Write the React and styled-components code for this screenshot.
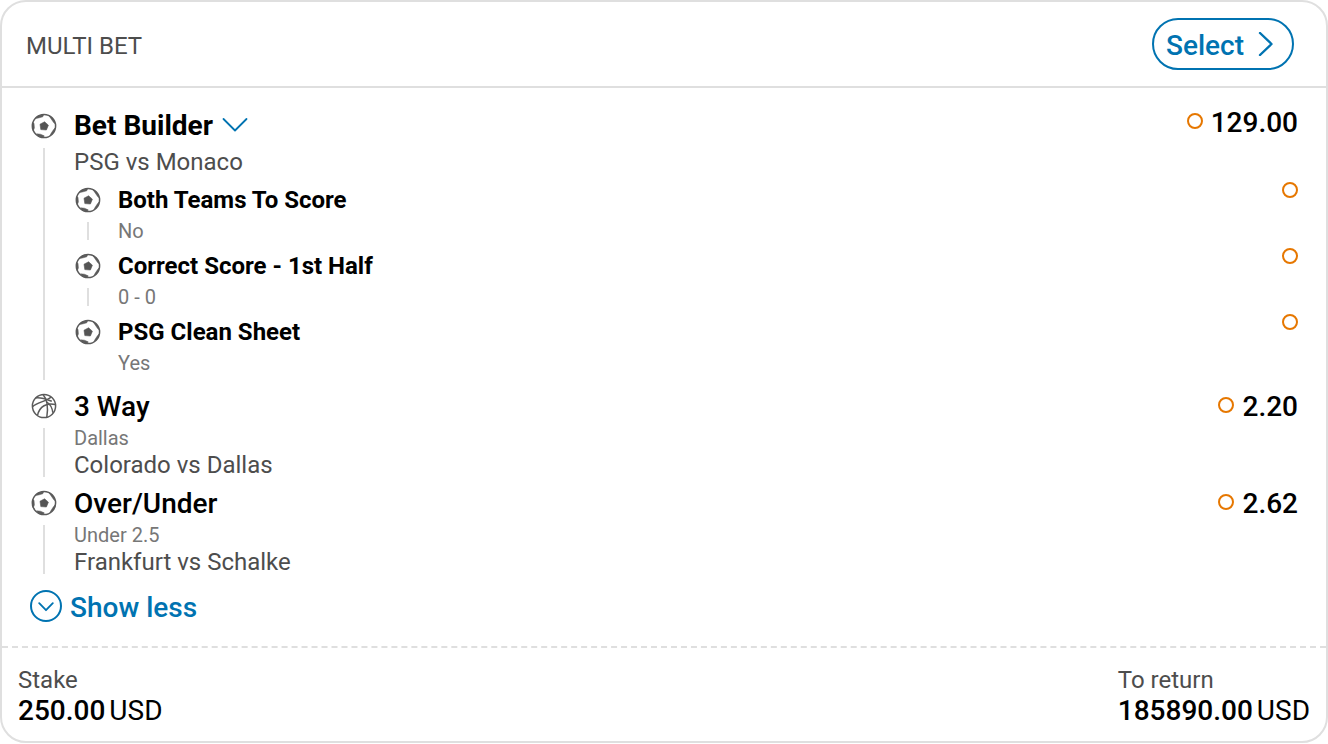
import React from "react";
import styled, { createGlobalStyle } from "styled-components";

const colors = {
  blue: "#0073b1",
  orange: "#e67700",
  line: "#dfdfdf",
  text: "#4d4d4d",
  muted: "#777",
};

const selections = [
  {
    sport: "football",
    title: "Bet Builder",
    bold: true,
    event: "PSG vs Monaco",
    odds: "129.00",
    legs: [
      { title: "Both Teams To Score", pick: "No" },
      { title: "Correct Score - 1st Half", pick: "0 - 0" },
      { title: "PSG Clean Sheet", pick: "Yes" },
    ],
  },
  {
    sport: "basketball",
    title: "3 Way",
    pick: "Dallas",
    event: "Colorado vs Dallas",
    odds: "2.20",
  },
  {
    sport: "football",
    title: "Over/Under",
    pick: "Under 2.5",
    event: "Frankfurt vs Schalke",
    odds: "2.62",
  },
];

const FootballIcon = () => (
  <svg width="26" height="26" viewBox="0 0 26 26" fill="none">
    <circle cx="13" cy="13" r="11.6" stroke="#5a5a5a" strokeWidth="1.5" />
    <path
      d="M9 11.2L13.6 8.8L17.4 12.2L15.4 17L9.8 16.6Z"
      fill="#555"
      stroke="#555"
      strokeWidth="0.6"
    />
    <path
      d="M7 2.8L12.6 1.8L11.8 3.8L7.4 5L4.4 5.6ZM17.6 2.2L22.2 6L24.4 10.8L22.8 9.8L20.2 6ZM1.4 9.4L3 10.2L3.4 15L2.2 17.8L1.2 15.6ZM24.6 14.4L22.6 19.6L18.8 23L20 20.4L22.6 16.6ZM5.6 20.8L9.4 21.2L13.2 22.8L12.4 24.6L7.4 23.4Z"
      fill="#5a5a5a"
      stroke="#5a5a5a"
      strokeWidth="0.5"
    />
  </svg>
);

const BasketballIcon = () => (
  <svg
    width="26"
    height="26"
    viewBox="0 0 26 26"
    fill="none"
    stroke="#5a5a5a"
    strokeWidth="1.5"
  >
    <circle cx="13" cy="13" r="11.6" />
    <path d="M4.6 5C8 4.2 12 5 20.8 8.2" />
    <path d="M1.6 13.6C6 9.4 15 8.4 20.2 4" />
    <path d="M12 1.4C15.6 5.4 17.4 14 15.8 24.2" />
    <path d="M24.4 11.6C16 9.4 8.4 13.4 6.6 22.2" />
    <path d="M15.8 9C19.4 11.4 21.4 15 21.8 19.8" />
  </svg>
);

const Arrow = ({ width, height, d, stroke = 2 }) => (
  <svg
    width={width}
    height={height}
    viewBox={`0 0 ${width} ${height}`}
    fill="none"
    stroke={colors.blue}
    strokeWidth={stroke}
    strokeLinecap="round"
    strokeLinejoin="round"
  >
    <path d={d} />
  </svg>
);

const Selection = ({ item }) => (
  <SelectionStyled>
    <Rail>
      <IconBox>
        {item.sport === "football" ? <FootballIcon /> : <BasketballIcon />}
      </IconBox>
      <RailLine />
    </Rail>
    <Details $spaced={!!item.legs}>
      <Title $bold={item.bold}>
        {item.title}
        {item.legs && (
          <Arrow width={26} height={16} d="M1.5 2L13 13.5L24.5 2" stroke={1.8} />
        )}
      </Title>
      {item.pick && <Pick>{item.pick}</Pick>}
      <Event $spaced={!!item.legs}>{item.event}</Event>
      {item.legs && item.legs.map((leg) => <Leg key={leg.title} leg={leg} />)}
    </Details>
    <Odds $raised={!!item.legs}>
      <Ring />
      {item.odds}
    </Odds>
  </SelectionStyled>
);

const Leg = ({ leg }) => (
  <LegStyled>
    <LegRail>
      <FootballIcon />
      <LegLine />
    </LegRail>
    <LegText>
      <LegTitle>{leg.title}</LegTitle>
      <LegPick>{leg.pick}</LegPick>
    </LegText>
    <Ring />
  </LegStyled>
);

const App = () => {
  return (
    <>
      <GlobalStyle />
      <Card>
        <Header>
          <Heading>MULTI BET</Heading>
          <SelectButton>
            <span>Select</span>
            <Arrow width={16} height={24} d="M2 1L13.5 12L2 23" stroke={2.4} />
          </SelectButton>
        </Header>
        <Body>
          {selections.map((item) => (
            <Selection key={item.title} item={item} />
          ))}
          <ShowLess>
            <Circle>
              <Arrow width={16} height={10} d="M1.2 1.2L8 8.2L14.8 1.2" stroke={1.8} />
            </Circle>
            <span>Show less</span>
          </ShowLess>
        </Body>
        <Footer>
          <Total>
            <Label>Stake</Label>
            <Amount>
              <b>250.00</b>USD
            </Amount>
          </Total>
          <Total>
            <Label>To return</Label>
            <Amount>
              <b>185890.00</b>USD
            </Amount>
          </Total>
        </Footer>
      </Card>
    </>
  );
};

const GlobalStyle = createGlobalStyle`
  * {
    box-sizing: border-box;
  }
  body {
    margin: 0;
    background: #fff;
    font-family: Roboto, sans-serif;
  }
  svg {
    display: block;
    flex: none;
  }
`;

const Card = styled.div`
  display: flex;
  flex-direction: column;
  width: 1328px;
  height: 743px;
  border: 2px solid ${colors.line};
  border-radius: 26px;
  background: #fff;
  white-space: nowrap;
`;

const Header = styled.div`
  display: flex;
  align-items: center;
  justify-content: space-between;
  height: 86px;
  padding: 0 32px 0 24px;
  border-bottom: 2px solid ${colors.line};
`;

const Heading = styled.div`
  color: ${colors.text};
  font-size: 24px;
  padding-top: 3px;
`;

const SelectButton = styled.button`
  display: flex;
  align-items: center;
  justify-content: space-between;
  width: 142px;
  height: 52px;
  padding: 0 18px 0 12px;
  border: 2px solid ${colors.blue};
  border-radius: 26px;
  background: #fff;
  color: ${colors.blue};
  font-family: inherit;
  font-size: 28px;
  font-weight: 500;
  span {
    padding-top: 2px;
  }
`;

const Body = styled.div`
  flex: 1;
  padding: 20px 28px 0;
`;

const SelectionStyled = styled.div`
  display: flex;
  position: relative;
`;

const Rail = styled.div`
  display: flex;
  flex-direction: column;
  align-items: center;
  width: 28px;
  margin-right: 16px;
`;

const IconBox = styled.div`
  display: flex;
  align-items: center;
  height: 36px;
`;

const RailLine = styled.div`
  flex: 1;
  width: 2px;
  margin: 4px 0 8px;
  background: ${colors.line};
`;

const Details = styled.div`
  flex: 1;
  padding-bottom: ${(props) => (props.$spaced ? 8 : 0)}px;
`;

const Title = styled.div`
  display: flex;
  align-items: center;
  gap: 9px;
  height: 36px;
  padding-bottom: ${(props) => (props.$bold ? 2 : 0)}px;
  color: #000;
  font-size: 28px;
  font-weight: ${(props) => (props.$bold ? 700 : 500)};
`;

const Pick = styled.div`
  height: 27px;
  line-height: 28px;
  color: ${colors.muted};
  font-size: 20px;
`;

const Event = styled.div`
  height: ${(props) => (props.$spaced ? 38 : 34)}px;
  line-height: ${(props) => (props.$spaced ? 36 : 28)}px;
  color: ${colors.text};
  font-size: 24px;
`;

const LegStyled = styled.div`
  display: flex;
  height: 66px;
`;

const LegRail = styled.div`
  display: flex;
  flex-direction: column;
  align-items: center;
  width: 28px;
  margin-right: 16px;
  padding-top: 5px;
`;

const LegLine = styled.div`
  width: 2px;
  height: 18px;
  margin-top: 9px;
  background: ${colors.line};
  ${LegStyled}:last-child & {
    display: none;
  }
`;

const LegText = styled.div`
  flex: 1;
`;

const LegTitle = styled.div`
  height: 34px;
  line-height: 36px;
  color: #000;
  font-size: 24px;
  font-weight: 700;
`;

const LegPick = styled.div`
  line-height: 30px;
  color: ${colors.muted};
  font-size: 20px;
`;

const Ring = styled.span`
  flex: none;
  width: 16px;
  height: 16px;
  border: 2px solid ${colors.orange};
  border-radius: 50%;
`;

/* sits over the first line so the legs can use the full row width */
const Odds = styled.div`
  position: absolute;
  top: ${(props) => (props.$raised ? -4 : 0)}px;
  right: 0;
  display: flex;
  align-items: center;
  gap: 8px;
  height: 36px;
  color: #000;
  font-size: 28px;
  font-weight: 500;
  ${Ring} {
    margin-bottom: 3px;
  }
`;

const ShowLess = styled.div`
  display: flex;
  align-items: center;
  gap: 8px;
  height: 48px;
  color: ${colors.blue};
  font-size: 28px;
  font-weight: 500;
  > span:last-child {
    padding-top: 2px;
  }
`;

const Circle = styled.span`
  display: flex;
  align-items: center;
  justify-content: center;
  width: 32px;
  height: 32px;
  padding-top: 1px;
  border: 2px solid ${colors.blue};
  border-radius: 50%;
`;

const Footer = styled.div`
  display: flex;
  justify-content: space-between;
  height: 95px;
  padding: 16px 16px 0 16px;
  border-top: 2px dashed ${colors.line};
`;

const Total = styled.div`
  color: #000;
`;

const Label = styled.div`
  height: 30px;
  line-height: 32px;
  color: ${colors.text};
  font-size: 24px;
`;

const Amount = styled.div`
  line-height: 34px;
  font-size: 28px;
  b {
    margin-right: 4px;
    font-weight: 500;
  }
`;

export default App;
